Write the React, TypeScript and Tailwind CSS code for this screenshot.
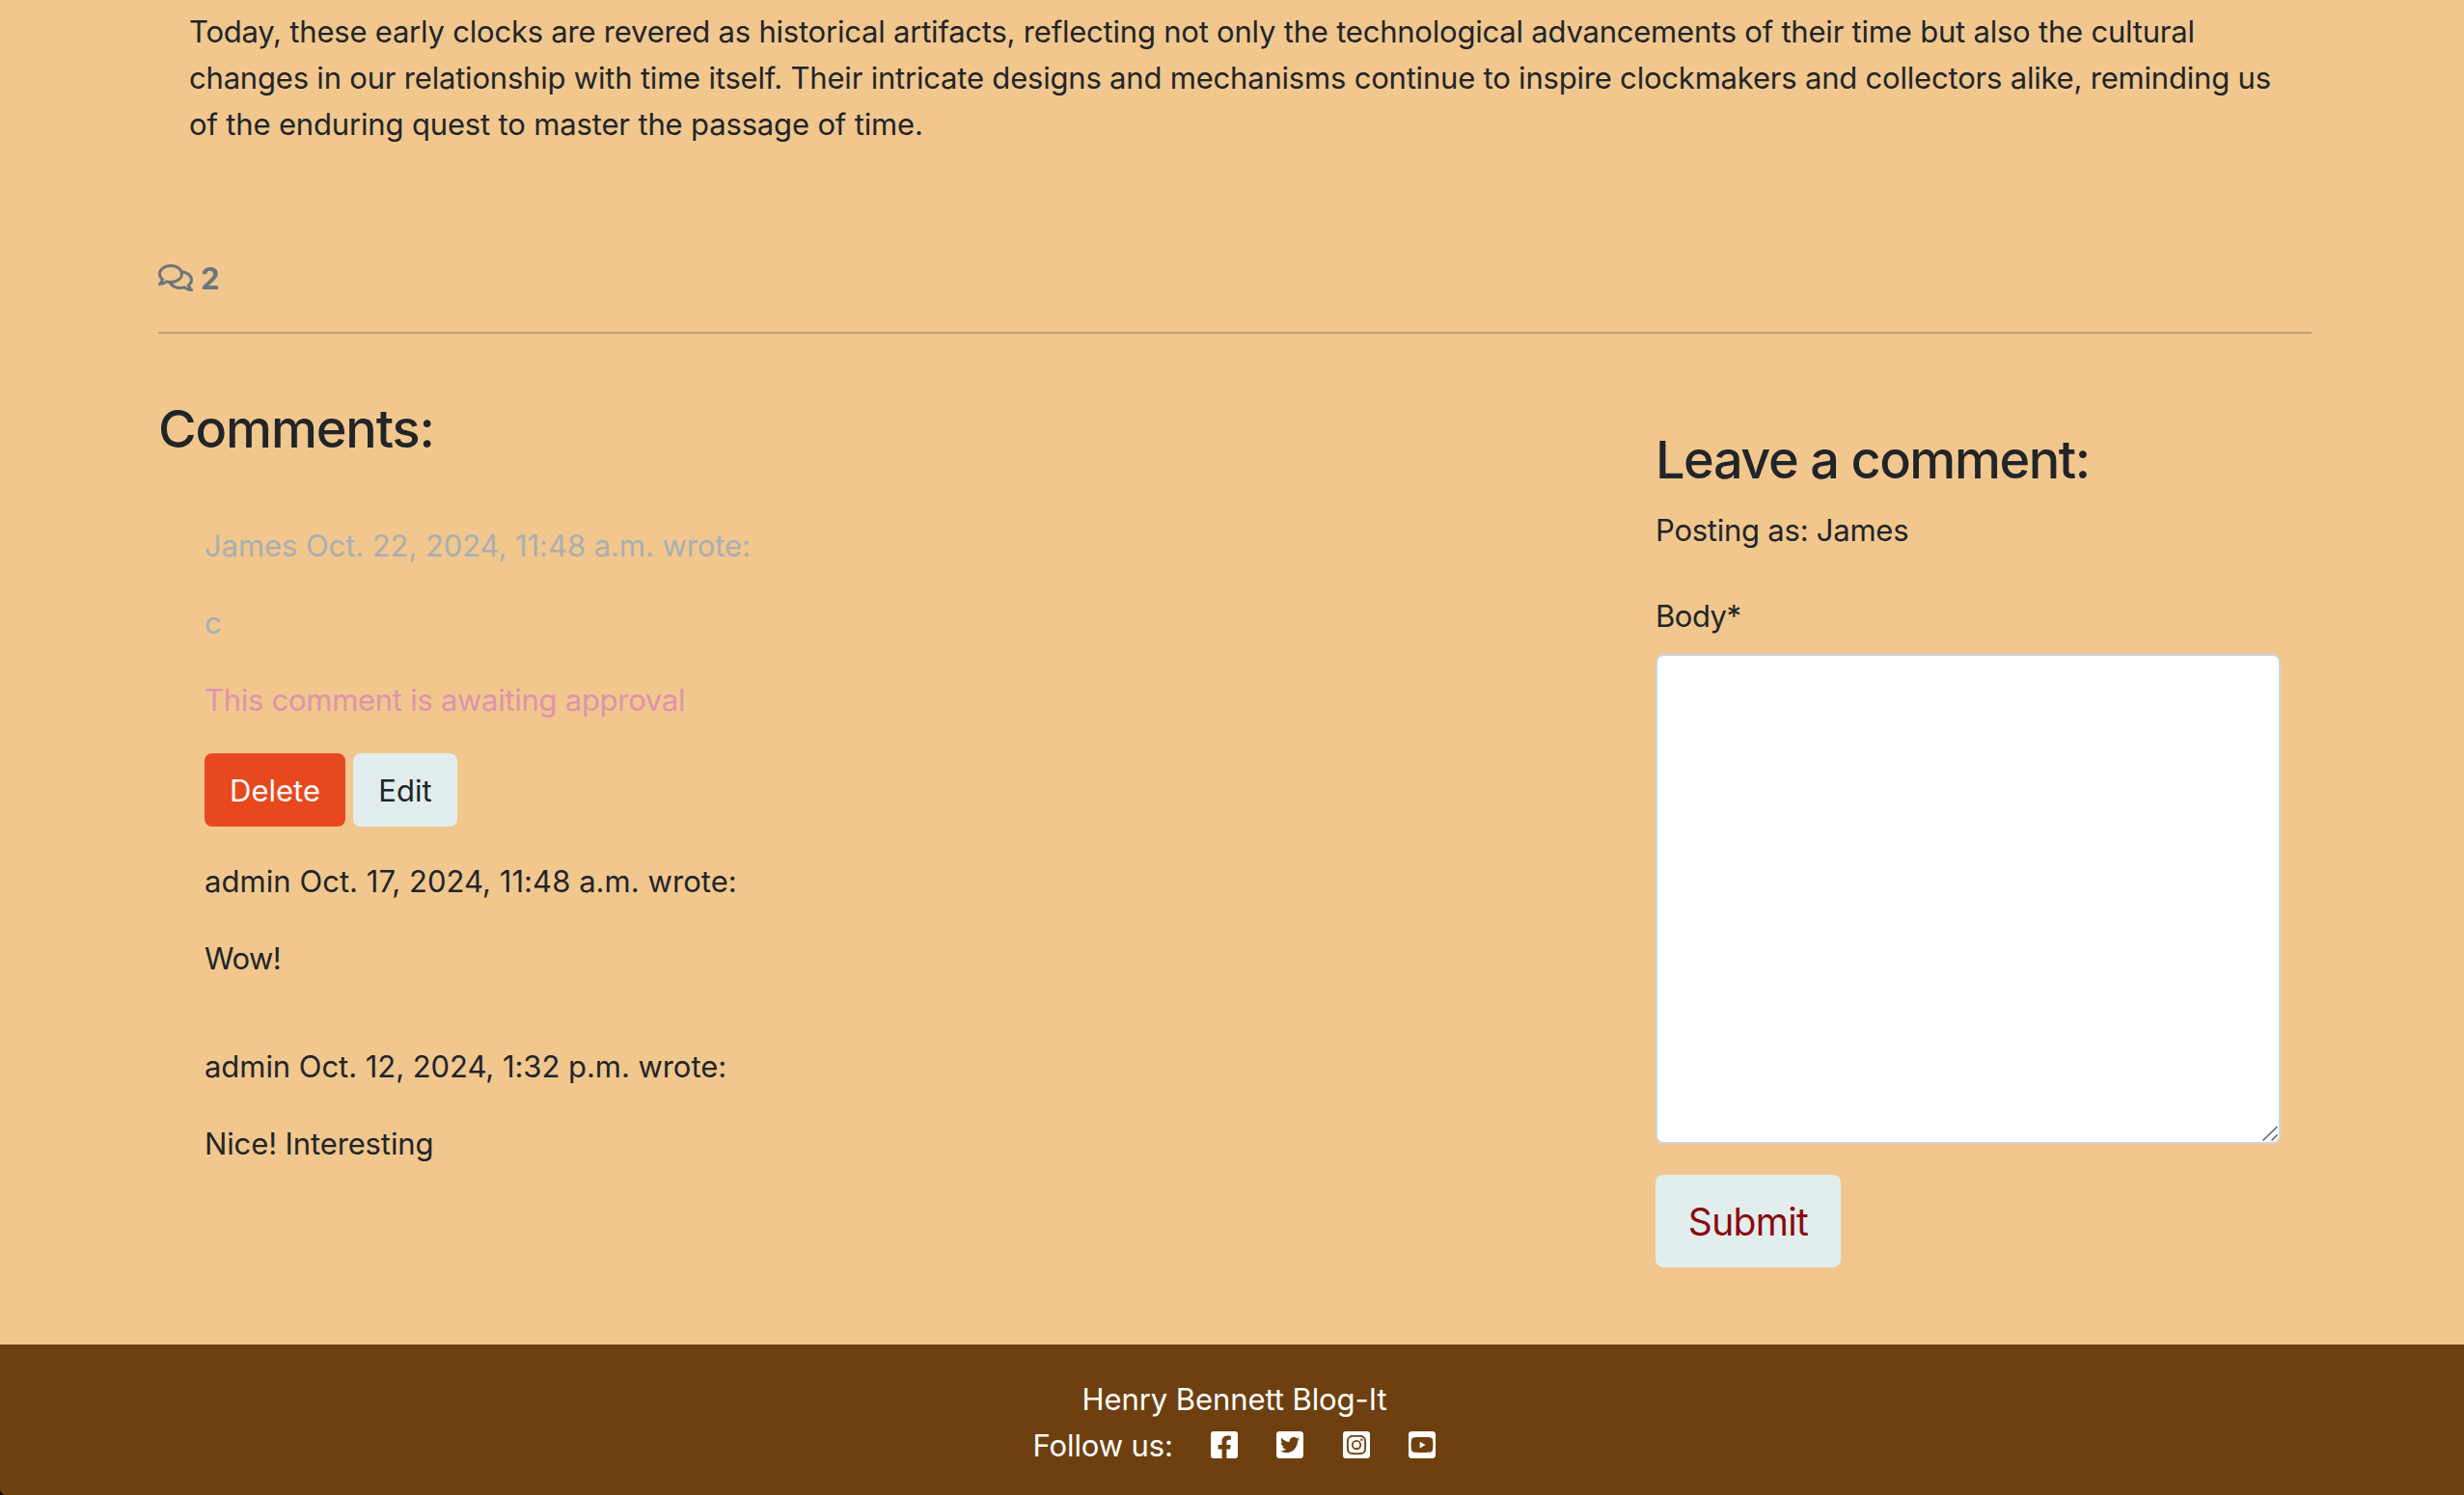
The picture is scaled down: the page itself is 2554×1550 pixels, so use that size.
import React from "react";
import {
  FaRegComments,
  FaFacebookSquare,
  FaTwitterSquare,
  FaInstagramSquare,
  FaYoutubeSquare,
} from "react-icons/fa";

function Article() {
  return (
    <p className="ml-[196px] whitespace-nowrap">
      <span className="block tracking-[-0.213px]">
        Today, these early clocks are revered as historical artifacts, reflecting not only the
        technological advancements of their time but also the cultural
      </span>
      <span className="block tracking-[-0.199px]">
        changes in our relationship with time itself. Their intricate designs and mechanisms
        continue to inspire clockmakers and collectors alike, reminding us
      </span>
      <span className="block tracking-[-0.157px]">
        of the enduring quest to master the passage of time.
      </span>
    </p>
  );
}

function Comments() {
  return (
    <section className="w-[1552px] pt-[65px]">
      <h3 className="text-[54px] leading-[68px] font-medium tracking-[-1.1px]">Comments:</h3>
      <div className="mt-[63px] ml-12 flex flex-col">
        <div className="flex flex-col gap-8 text-[#a9afb2]">
          <p className="tracking-[-0.075px]">James Oct. 22, 2024, 11:48 a.m. wrote:</p>
          <p>c</p>
          <p className="tracking-[-0.28px] text-[#df93ae]">This comment is awaiting approval</p>
        </div>
        <div className="mt-[31px] flex gap-2">
          <button className="h-[76px] w-[146px] rounded-lg bg-[#e8481e] pt-0.5 text-white">
            Delete
          </button>
          <button className="h-[76px] w-[108px] rounded-lg bg-[#e2eeed] pt-0.5">Edit</button>
        </div>
        <div className="mt-[33px] flex flex-col gap-8">
          <p className="tracking-[0.05px]">admin Oct. 17, 2024, 11:48 a.m. wrote:</p>
          <p className="tracking-[-0.5px]">Wow!</p>
        </div>
        <div className="mt-16 flex flex-col gap-8">
          <p className="tracking-[-0.05px]">admin Oct. 12, 2024, 1:32 p.m. wrote:</p>
          <p className="tracking-[-0.12px]">Nice! Interesting</p>
        </div>
      </div>
    </section>
  );
}

function CommentForm() {
  return (
    <section className="flex w-[648px] flex-col pt-[97px]">
      <h3 className="text-[54px] leading-[68px] font-medium tracking-[-1.42px]">
        Leave a comment:
      </h3>
      <p className="mt-[15px] tracking-[-0.24px]">Posting as: James</p>
      <label htmlFor="body" className="mt-[41px] tracking-[-0.48px]">
        Body*
      </label>
      <div className="relative mt-[15px] h-[508px]">
        <textarea
          id="body"
          className="block h-full w-full resize-none rounded-lg border-2 border-[#ced4da] bg-white"
        />
        <svg
          className="absolute right-[3px] bottom-[3px] h-4 w-4"
          viewBox="0 0 16 16"
          fill="none"
          stroke="#5c5c5c"
          strokeWidth="1.5"
        >
          <path d="M0.5 15.5 15.5 1M9.5 15.5l6-6" />
        </svg>
      </div>
      <button className="mt-8 h-24 w-48 rounded-lg bg-[#e2eeed] pt-px text-[39px] tracking-[-0.65px] text-[#8b0a0e]">
        Submit
      </button>
    </section>
  );
}

function Footer() {
  return (
    <footer className="relative mt-20 flex h-[156px] flex-col items-center bg-[#6e400f] pt-[33px] text-white">
      <p className="ml-[5px] tracking-[-0.073px]">Henry Bennett Blog-It</p>
      <div className="ml-[5px] flex h-12 items-start">
        <p className="mr-[39px] tracking-[-0.1px]">Follow us:</p>
        <div className="flex gap-[40.5px] pt-[7px]">
          <FaFacebookSquare className="h-8 w-7" />
          <FaTwitterSquare className="h-8 w-7" />
          <FaInstagramSquare className="h-8 w-7" />
          <FaYoutubeSquare className="h-8 w-7" />
        </div>
      </div>
      <div className="absolute bottom-0 left-0 h-2 w-2 bg-[radial-gradient(circle_at_100%_0%,transparent_8px,#0c0606_9px)]" />
    </footer>
  );
}

export default function App() {
  return (
    <div className="h-[1550px] w-[2554px] overflow-hidden bg-[#f1c78e] pt-[9px] font-['Inter',sans-serif] text-[31px] leading-[48px] text-[#212529]">
      <Article />
      <div className="mx-[164px] mt-28 mr-[158px]">
        <div className="flex h-12 items-center font-bold text-[#6c757d]">
          <FaRegComments className="-mt-[3px] mr-2 h-8 w-9" />
          <span>2</span>
        </div>
        <hr className="mt-[31px] border-0 border-t-2 border-[#bd9f75]" />
        <div className="flex">
          <Comments />
          <CommentForm />
        </div>
      </div>
      <Footer />
    </div>
  );
}
